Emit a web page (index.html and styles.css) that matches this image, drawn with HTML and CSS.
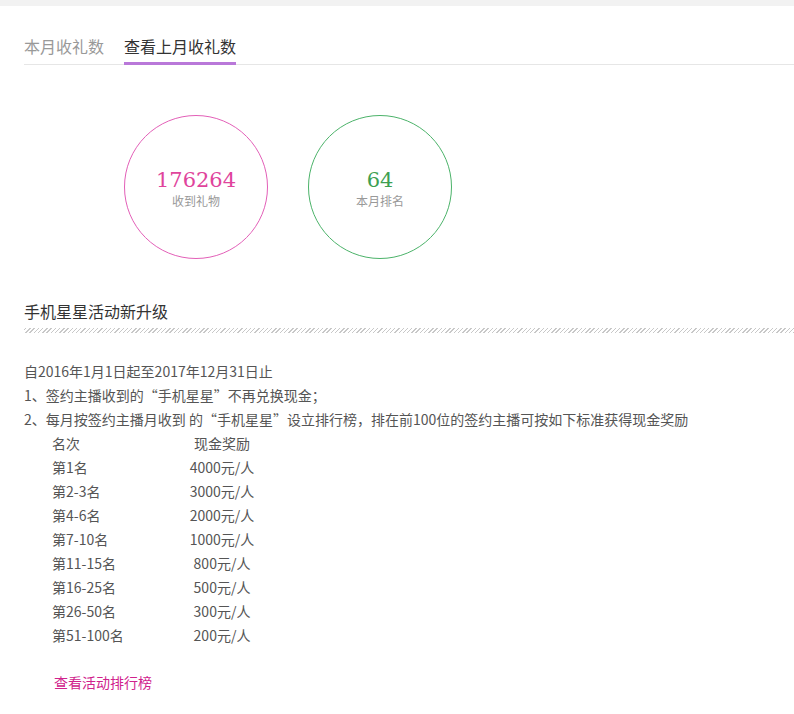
FILE: index.html
```html
<!DOCTYPE html>
<html lang="zh-CN">

<head>
    <meta charset="UTF-8">
    <meta name="viewport" content="width=device-width, initial-scale=1.0">
    <title>收礼数</title>
    <link rel="stylesheet" href="styles.css">
</head>

<body>
<div class="top-bar"></div>
<main class="page">
    <div class="tabs">
        <a class="tab">本月收礼数</a>
        <a class="tab active">查看上月收礼数</a>
    </div>

    <div class="stats">
        <div class="circle pink">
            <span class="num">176264</span>
            <span class="label">收到礼物</span>
        </div>
        <div class="circle green">
            <span class="num">64</span>
            <span class="label">本月排名</span>
        </div>
    </div>

    <h2 class="section-title">手机星星活动新升级</h2>
    <div class="hatch"></div>

    <div class="rules">
        <p>自2016年1月1日起至2017年12月31日止</p>
        <p>1、签约主播收到的“手机星星”不再兑换现金；</p>
        <p>2、每月按签约主播月收到 的“手机星星”设立排行榜，排在前100位的签约主播可按如下标准获得现金奖励</p>
        <table class="reward">
            <tr><td>名次</td><td>现金奖励</td></tr>
            <tr><td>第1名</td><td>4000元/人</td></tr>
            <tr><td>第2-3名</td><td>3000元/人</td></tr>
            <tr><td>第4-6名</td><td>2000元/人</td></tr>
            <tr><td>第7-10名</td><td>1000元/人</td></tr>
            <tr><td>第11-15名</td><td>800元/人</td></tr>
            <tr><td>第16-25名</td><td>500元/人</td></tr>
            <tr><td>第26-50名</td><td>300元/人</td></tr>
            <tr><td>第51-100名</td><td>200元/人</td></tr>
        </table>
        <a class="rank-link" href="#">查看活动排行榜</a>
    </div>
</main>
</body>

</html>
```

FILE: styles.css
```css
body {
    font-family: 'Noto Sans CJK SC', 'Liberation Sans', sans-serif;
    margin: 0;
    padding: 0;
    background-color: #fff;
    color: #555;
}

.top-bar {
    height: 6px;
    background-color: #f2f2f2;
}

.page {
    padding-left: 24px;
}

.tabs {
    display: flex;
    gap: 20px;
    margin-top: 24px;
    border-bottom: 1px solid #e6e6e6;
}

.tab {
    font-size: 16px;
    line-height: 32px;
    color: #999;
    border-bottom: 3px solid transparent;
    margin-bottom: -1px;
}

.tab.active {
    color: #333;
    border-bottom-color: #b978d9;
}

.stats {
    display: flex;
    gap: 40px;
    padding-left: 100px;
    margin-top: 50px;
}

.circle {
    width: 142px;
    height: 142px;
    border-radius: 50%;
    border: 1px solid;
    display: flex;
    flex-direction: column;
    align-items: center;
    justify-content: center;
}

.circle.pink {
    border-color: #e360b8;
}

.circle.green {
    border-color: #4cb36a;
}

.num {
    font-family: 'DejaVu Serif', 'Liberation Serif', serif;
    font-size: 21px;
    line-height: 24px;
    margin-top: 4px;
}

.pink .num {
    color: #e0449c;
}

.green .num {
    color: #3e9f52;
}

.label {
    font-size: 12px;
    line-height: 18px;
    color: #999;
}

.section-title {
    font-size: 16px;
    font-weight: normal;
    color: #333;
    line-height: 22px;
    margin: 41px 0 0;
}

.hatch {
    height: 5px;
    margin-top: 6px;
    background: repeating-linear-gradient(-45deg, #c8c8c8 0, #c8c8c8 1px, #fff 1px, #fff 3px);
}

.rules {
    margin-top: 26px;
    font-size: 14px;
    line-height: 24px;
}

.rules p {
    margin: 0;
}

.reward {
    border-collapse: collapse;
    margin-left: 28px;
}

.reward td {
    padding: 0;
    height: 24px;
}

.reward td:first-child {
    width: 110px;
}

.reward td:last-child {
    width: 120px;
    text-align: center;
}

.rank-link {
    display: inline-block;
    margin: 23px 0 0 30px;
    color: #d0228c;
    text-decoration: none;
}
```
